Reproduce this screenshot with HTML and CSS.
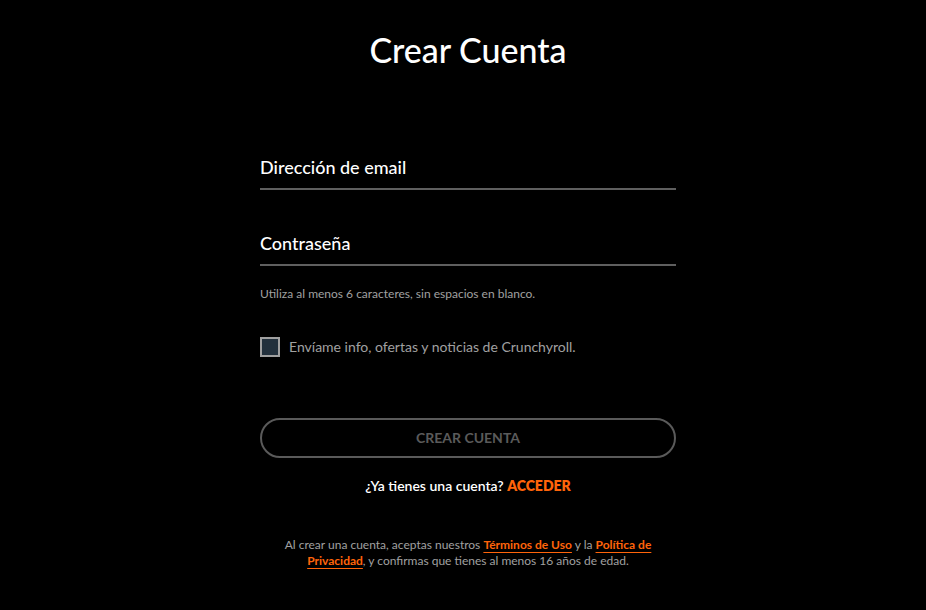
FILE: index.html
```html
<!DOCTYPE html>
<html lang="es">
<head>
<meta charset="utf-8">
<title>Crear Cuenta</title>
<link rel="stylesheet" href="styles.css">
</head>
<body>
<main class="page">
  <h1 class="title">Crear Cuenta</h1>
  <form class="form">
    <label class="field field-email">
      <span class="field-label">Dirección de email</span>
    </label>
    <label class="field field-pass">
      <span class="field-label">Contraseña</span>
    </label>
    <p class="hint">Utiliza al menos 6 caracteres, sin espacios en blanco.</p>
    <label class="check">
      <span class="box"></span>
      <span class="check-label">Envíame info, ofertas y noticias de Crunchyroll.</span>
    </label>
    <button type="button" class="btn">CREAR CUENTA</button>
    <p class="login">¿Ya tienes una cuenta? <a class="login-link" href="#">ACCEDER</a></p>
    <p class="legal">Al crear una cuenta, aceptas nuestros <a href="#">Términos de Uso</a> y la <a href="#">Política de Privacidad</a>, y confirmas que tienes al menos 16 años de edad.</p>
  </form>
</main>
</body>
</html>
```
FILE: styles.css
```css
html, body {
  margin: 0;
  padding: 0;
  background: #000;
}
body {
  font-family: Lato, "Liberation Sans", sans-serif;
  color: #fff;
}
.page {
  width: 416px;
  margin-left: 260px;
  padding-top: 30px;
}
.title {
  margin: 0;
  font-size: 34px;
  line-height: 40px;
  font-weight: 500;
  text-align: center;
}
.form {
  display: flex;
  flex-direction: column;
  margin-top: 85px;
}
.field {
  display: block;
  padding-bottom: 9px;
  border-bottom: 2px solid #5f5f5f;
}
.field-label {
  display: block;
  font-size: 18px;
  line-height: 24px;
  font-weight: 500;
  color: #fff;
}
.field-pass {
  margin-top: 41px;
}
.hint {
  margin: 20px 0 0;
  font-size: 12px;
  line-height: 16px;
  color: #a0a0a0;
}
.check {
  display: flex;
  align-items: center;
  gap: 9px;
  margin-top: 35px;
}
.box {
  width: 16px;
  height: 16px;
  border: 2px solid #a0a0a0;
  background: #23313d;
}
.check-label {
  font-size: 14px;
  line-height: 20px;
  color: #a0a0a0;
}
.btn {
  margin-top: 61px;
  height: 40px;
  border: 2px solid #5a5a5a;
  border-radius: 20px;
  background: transparent;
  color: #5a5a5a;
  font-family: Lato, "Liberation Sans", sans-serif;
  font-size: 14px;
  font-weight: 700;
  padding: 0 0 2px;
}
.login {
  margin: 18px 0 0;
  font-size: 14px;
  line-height: 20px;
  text-align: center;
  font-weight: 600;
  color: #fff;
}
.login-link {
  color: #ff640a;
  font-weight: 800;
  text-decoration: none;
}
.legal {
  margin: 41px auto 0;
  max-width: 372px;
  font-size: 12px;
  line-height: 16px;
  text-align: center;
  color: #a0a0a0;
}
.legal a {
  color: #ff640a;
  font-weight: 700;
  text-decoration: underline;
  text-underline-offset: 3px;
}
```
